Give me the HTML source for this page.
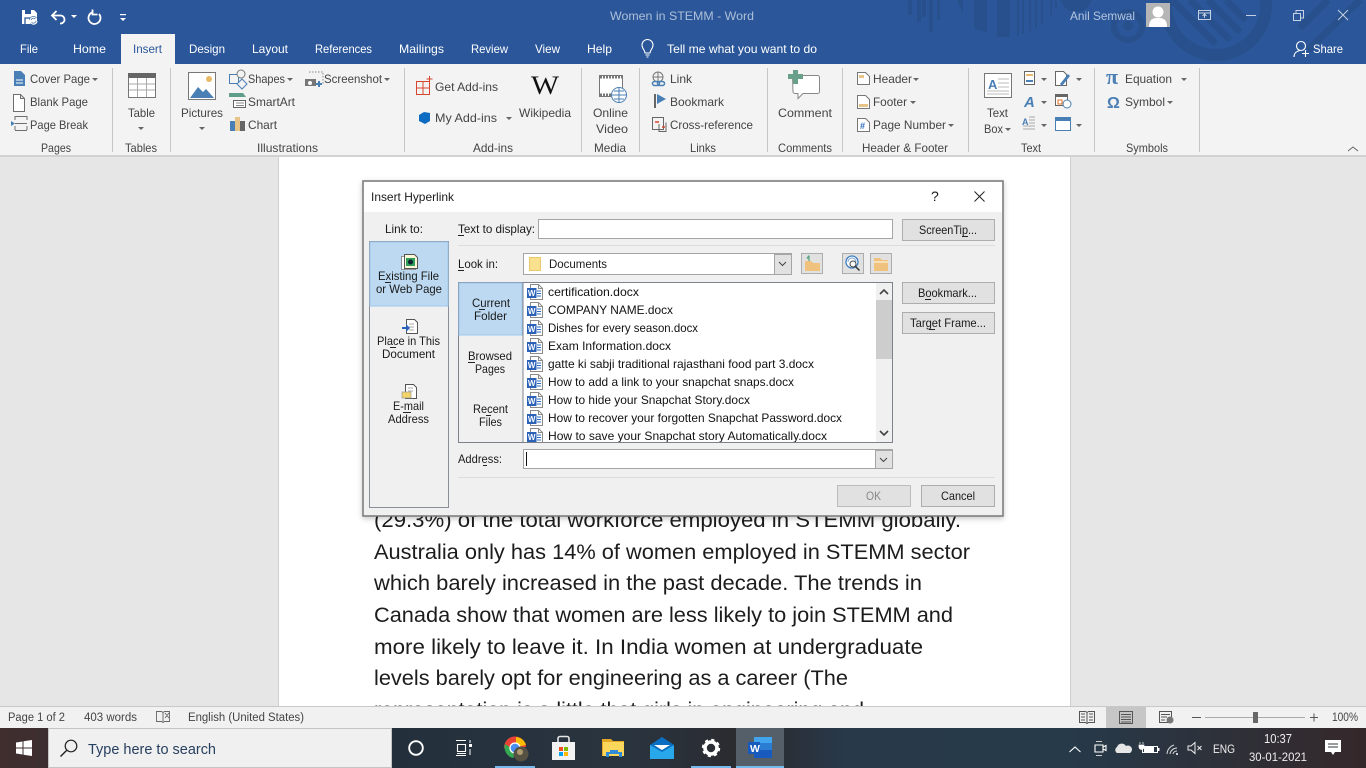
<!DOCTYPE html>
<html><head><meta charset="utf-8"><title>Women in STEMM - Word</title>
<style>
html,body{margin:0;padding:0;width:1366px;height:768px;overflow:hidden;background:#e6e6e6}
svg{display:block}
text{font-family:"Liberation Sans",sans-serif;font-size:12px;fill:#333}
.r text{fill:#444}
.d text{fill:#1a1a1a}
.tab text{fill:#fff}
.f text{fill:#111;font-size:11.6px}
.doc text{fill:#1c1c1c;font-size:21.5px}
.st text{fill:#444;font-size:11.5px}
.tb text{fill:#eee}
</style></head><body>
<svg width="1366" height="768" viewBox="0 0 1366 768" xmlns="http://www.w3.org/2000/svg">
<defs>
<linearGradient id="tbg" x1="0" x2="1" y1="0" y2="0">
<stop offset="0" stop-color="#402e2e"/><stop offset=".29" stop-color="#23303c"/><stop offset=".46" stop-color="#2a343f"/><stop offset=".55" stop-color="#2b2a2e"/><stop offset=".62" stop-color="#28394a"/><stop offset=".78" stop-color="#263a4a"/><stop offset="1" stop-color="#35282a"/>
</linearGradient>
<filter id="sh" x="-5%" y="-5%" width="110%" height="112%"><feDropShadow dx="0" dy="2" stdDeviation="3" flood-color="#000" flood-opacity=".22"/></filter>
<symbol id="wd" width="20" height="18" viewBox="0 0 20 18">
<path d="M6.500 1.500h8l4 4v11h-12z" fill="#fff" stroke="#8a8a8a"/><path d="M14.500 1.500v4h4" fill="none" stroke="#8a8a8a"/>
<path d="M13 8h4M13 10.500h4M13 13h4" stroke="#2b6cc0" fill="none"/>
<rect x="3" y="5" width="9.500" height="10" fill="#2b62b8"/>
<text x="7.700" y="13" text-anchor="middle" style="font-size:8px;font-weight:bold;fill:#fff">W</text>
</symbol>
<clipPath id="fc"><rect x="524" y="283" width="352" height="159"/></clipPath>
<clipPath id="tc"><rect x="0" y="0" width="1366" height="64"/></clipPath>
</defs>

<!-- title -->
<rect width="1366" height="64" fill="#2b579a"/>
<g fill="#27508c" clip-path="url(#tc)">
<rect x="908" y="0" width="4" height="15"/><rect x="917" y="0" width="4" height="22"/><rect x="922" y="0" width="4" height="17"/><rect x="929" y="0" width="4" height="32"/><rect x="937" y="0" width="3" height="20"/>
<path d="M957 0h6v14z"/><path d="M974 0h13v33l-13-5z"/><rect x="997" y="0" width="13" height="37"/>
<rect x="1017" y="0" width="2" height="36"/><rect x="1022" y="0" width="2" height="34"/><rect x="1029" y="0" width="2" height="31"/><rect x="1035" y="0" width="2" height="28"/><rect x="1041" y="0" width="2" height="24"/><rect x="1050" y="0" width="2" height="15"/><rect x="1055" y="0" width="2" height="8"/>
<circle cx="1076" cy="-4" r="16"/>
<circle cx="1128" cy="26" r="5"/>
<circle cx="1128" cy="26" r="14" fill="none" stroke="#27508c" stroke-width="6"/>
<circle cx="1216" cy="5" r="50" fill="none" stroke="#27508c" stroke-width="12"/>
<path d="M1172 0l44 44M1190 0l40 40M1208 0l32 32M1226 0l20 20M1328 0l-28 28M1360 0l-52 50" stroke="#27508c" stroke-width="7" fill="none"/>
</g>
<path d="M22 10h12l3 3v11H22z" fill="#fff"/><path d="M25 10h6v4h-6z" fill="#2b579a"/><path d="M25 24v-6h5" fill="none" stroke="#2b579a" stroke-width="1.300"/>
<path d="M30 20a3.500 3.500 0 0 1 6-1.500M37 21a3.500 3.500 0 0 1-6 2" fill="none" stroke="#2b579a" stroke-width="2.400"/><path d="M30 20a3.500 3.500 0 0 1 6-1.500M37 21a3.500 3.500 0 0 1-6 2" fill="none" stroke="#fff" stroke-width="1.200"/>
<g fill="none" stroke="#fff" stroke-width="1.800">
<path d="M56.500 11l-4.500 4.500 4.500 4.500M52 15.500h8a4 4 0 0 1 1 8h-1"/>
<path d="M92 12.500a6 6 0 1 0 7 1.500M92.500 9.500v5h5"/>
</g>
<path d="M71 15h6l-3 3zM120 18h6l-3 3z" fill="#fff"/><rect x="120" y="14" width="6" height="1.200" fill="#fff"/>
<text x="610" y="20" textLength="144" lengthAdjust="spacingAndGlyphs" style="fill:#aebfd8">Women in STEMM  -  Word</text>
<text x="1070" y="20" textLength="65" lengthAdjust="spacingAndGlyphs" style="fill:#b4c5dd">Anil Semwal</text>
<rect x="1146" y="3" width="24" height="24" fill="#b5b5b5"/>
<circle cx="1158" cy="12" r="5.500" fill="#fff"/><path d="M1149 27c0-8 4-9 9-9s9 1 9 9z" fill="#fff"/>
<g fill="none" stroke="#c6d2e4" stroke-width="1">
<path d="M1198.500 10.500h12v9h-12zM1198.500 13h12M1204.500 18v-4M1202.500 16l2-2 2 2"/>
<path d="M1246 15.500h10"/>
<path d="M1293.500 13.500h7v7h-7zM1296 13v-2.500h7.500v7.500h-3"/>
<path d="M1338 10l10 10M1348 10l-10 10"/>
</g>

<!-- tabs -->
<rect x="121" y="34" width="54" height="30" fill="#f3f3f3"/>
<g class="tab">
<text x="20" y="53" textLength="18" lengthAdjust="spacingAndGlyphs">File</text>
<text x="73" y="53" textLength="33" lengthAdjust="spacingAndGlyphs">Home</text>
<text x="133" y="53" textLength="29" lengthAdjust="spacingAndGlyphs" style="fill:#2b579a">Insert</text>
<text x="189" y="53" textLength="36" lengthAdjust="spacingAndGlyphs">Design</text>
<text x="252" y="53" textLength="36" lengthAdjust="spacingAndGlyphs">Layout</text>
<text x="315" y="53" textLength="57" lengthAdjust="spacingAndGlyphs">References</text>
<text x="399" y="53" textLength="45" lengthAdjust="spacingAndGlyphs">Mailings</text>
<text x="471" y="53" textLength="37" lengthAdjust="spacingAndGlyphs">Review</text>
<text x="535" y="53" textLength="25" lengthAdjust="spacingAndGlyphs">View</text>
<text x="587" y="53" textLength="25" lengthAdjust="spacingAndGlyphs">Help</text>
<text x="667" y="53" textLength="150" lengthAdjust="spacingAndGlyphs">Tell me what you want to do</text>
<text x="1313" y="53" textLength="30" lengthAdjust="spacingAndGlyphs">Share</text>
</g>
<g fill="none" stroke="#fff" stroke-width="1.100">
<path d="M645 53c0-3-3-4-3-8a5.500 5.500 0 0 1 11 0c0 4-3 5-3 8zM645.500 55h4M646.500 57h2"/>
<circle cx="1301" cy="46" r="4.500"/><path d="M1294 57c0-4 3-6 6-6.500M1302 53.500h7M1305.500 50v7"/>
</g>

<!-- ribbon -->
<rect y="64" width="1366" height="92" fill="#f3f3f3"/>
<rect y="155" width="1366" height="2" fill="#d2d2d2"/>
<g fill="#c6c6c6">
<rect x="112" y="68" width="1" height="84"/><rect x="170" y="68" width="1" height="84"/><rect x="404" y="68" width="1" height="84"/><rect x="581" y="68" width="1" height="84"/><rect x="639" y="68" width="1" height="84"/><rect x="767" y="68" width="1" height="84"/><rect x="842" y="68" width="1" height="84"/><rect x="968" y="68" width="1" height="84"/><rect x="1094" y="68" width="1" height="84"/><rect x="1199" y="68" width="1" height="84"/>
</g>
<g class="r">
<text x="30" y="83" textLength="60" lengthAdjust="spacingAndGlyphs">Cover Page</text>
<text x="30" y="106" textLength="58" lengthAdjust="spacingAndGlyphs">Blank Page</text>
<text x="30" y="129" textLength="58" lengthAdjust="spacingAndGlyphs">Page Break</text>
<text x="41" y="152" textLength="30" lengthAdjust="spacingAndGlyphs">Pages</text>
<text x="128" y="117" textLength="27" lengthAdjust="spacingAndGlyphs">Table</text>
<text x="125" y="152" textLength="32" lengthAdjust="spacingAndGlyphs">Tables</text>
<text x="181" y="117" textLength="42" lengthAdjust="spacingAndGlyphs">Pictures</text>
<text x="248" y="83" textLength="37" lengthAdjust="spacingAndGlyphs">Shapes</text>
<text x="248" y="106" textLength="47" lengthAdjust="spacingAndGlyphs">SmartArt</text>
<text x="248" y="129" textLength="29" lengthAdjust="spacingAndGlyphs">Chart</text>
<text x="324" y="83" textLength="58" lengthAdjust="spacingAndGlyphs">Screenshot</text>
<text x="257" y="152" textLength="61" lengthAdjust="spacingAndGlyphs">Illustrations</text>
<text x="435" y="91" textLength="63" lengthAdjust="spacingAndGlyphs">Get Add-ins</text>
<text x="435" y="122" textLength="62" lengthAdjust="spacingAndGlyphs">My Add-ins</text>
<text x="519" y="117" textLength="52" lengthAdjust="spacingAndGlyphs">Wikipedia</text>
<text x="473" y="152" textLength="40" lengthAdjust="spacingAndGlyphs">Add-ins</text>
<text x="593" y="117" textLength="35" lengthAdjust="spacingAndGlyphs">Online</text>
<text x="596" y="133" textLength="32" lengthAdjust="spacingAndGlyphs">Video</text>
<text x="594" y="152" textLength="32" lengthAdjust="spacingAndGlyphs">Media</text>
<text x="670" y="83" textLength="22" lengthAdjust="spacingAndGlyphs">Link</text>
<text x="670" y="106" textLength="54" lengthAdjust="spacingAndGlyphs">Bookmark</text>
<text x="670" y="129" textLength="83" lengthAdjust="spacingAndGlyphs">Cross-reference</text>
<text x="690" y="152" textLength="26" lengthAdjust="spacingAndGlyphs">Links</text>
<text x="778" y="117" textLength="54" lengthAdjust="spacingAndGlyphs">Comment</text>
<text x="778" y="152" textLength="54" lengthAdjust="spacingAndGlyphs">Comments</text>
<text x="873" y="83" textLength="39" lengthAdjust="spacingAndGlyphs">Header</text>
<text x="873" y="106" textLength="34" lengthAdjust="spacingAndGlyphs">Footer</text>
<text x="873" y="129" textLength="73" lengthAdjust="spacingAndGlyphs">Page Number</text>
<text x="862" y="152" textLength="86" lengthAdjust="spacingAndGlyphs">Header &amp; Footer</text>
<text x="987" y="117" textLength="21" lengthAdjust="spacingAndGlyphs">Text</text>
<text x="984" y="133" textLength="19" lengthAdjust="spacingAndGlyphs">Box</text>
<text x="1021" y="152" textLength="20" lengthAdjust="spacingAndGlyphs">Text</text>
<text x="1125" y="83" textLength="47" lengthAdjust="spacingAndGlyphs">Equation</text>
<text x="1125" y="106" textLength="40" lengthAdjust="spacingAndGlyphs">Symbol</text>
<text x="1126" y="152" textLength="42" lengthAdjust="spacingAndGlyphs">Symbols</text>
<text x="531" y="94" textLength="28" lengthAdjust="spacingAndGlyphs" style="font-family:'Liberation Serif',serif;font-size:26px;fill:#111">W</text>
<text x="1106" y="84" style="font-family:'Liberation Serif',serif;font-size:22px;font-weight:bold;fill:#4a7fb5">π</text>
<text x="1107" y="108" style="font-size:16px;font-weight:bold;fill:#4a7fb5">Ω</text>
</g>
<g fill="#666">
<path d="M92 78h6l-3 3zM287 78h6l-3 3zM384 78h6l-3 3zM138 127h6l-3 3zM199 127h6l-3 3zM506 117h6l-3 3zM913 78h6l-3 3zM910 101h6l-3 3zM948 124h6l-3 3zM1005 128h6l-3 3zM1041 78h6l-3 3zM1041 101h6l-3 3zM1041 124h6l-3 3zM1076 78h6l-3 3zM1076 124h6l-3 3zM1181 78h6l-3 3zM1167 101h6l-3 3z"/>
</g>
<path d="M1348 151l5-4 5 4" fill="none" stroke="#666"/>

<!-- ribbon icons -->
<path d="M14 71h7l4 4v11H14z" fill="#4a7fb5"/><path d="M16 80h7M16 83h7" stroke="#fff"/>
<path d="M13.500 94.500h7l4 4v13h-11zM20.500 94.500v4h4" fill="#fff" stroke="#6e6e6e"/>
<path d="M15 116.500h12M15 120v-4M27 120v-4M15 130.500h12M15 126v4M27 126v4M15 123.500h12" fill="none" stroke="#6e6e6e"/><path d="M11 121l4 2.500-4 2.500z" fill="#4a7fb5"/>

<rect x="128.500" y="73.500" width="27" height="24" fill="#fff" stroke="#777"/><rect x="128" y="73" width="28" height="5" fill="#666"/>
<path d="M129 84h26M129 90h26M137.500 78v19M146.500 78v19" stroke="#aaa" fill="none"/>

<rect x="188.500" y="72.500" width="27" height="27" fill="#fff" stroke="#777"/>
<circle cx="209" cy="79" r="3" fill="#e8b968"/><path d="M190 98l8-11 5 5 3-3 8 9z" fill="#4a7fb5"/>

<path d="M229.500 74.500h9v9h-9z" fill="none" stroke="#4a7fb5"/><circle cx="241" cy="74" r="4" fill="#f3f3f3" stroke="#777"/><path d="M237 84l5-5 5 5-5 5z" fill="#f3f3f3" stroke="#4a7fb5"/>
<path d="M229 93h14l3 4h-17z" fill="#5f9e8a"/><path d="M233.500 100.500h12v7h-12z" fill="#fff" stroke="#666"/><path d="M236 103h8M236 105.500h8" stroke="#888"/>
<rect x="230" y="121" width="5" height="10" fill="#4a7fb5"/><rect x="235" y="117" width="5" height="14" fill="#e8c388"/><rect x="240" y="121" width="5" height="10" fill="#666"/>
<path d="M309 72h14v12" fill="none" stroke="#888" stroke-dasharray="1.500 1.500"/><rect x="305" y="79" width="11" height="7" fill="#777"/><circle cx="310" cy="83" r="2" fill="#fff"/><path d="M318 81h2v2h2v2h-2v2h-2v-2h-2v-2h2z" fill="#4a7fb5"/>

<g fill="none" stroke="#d8442c"><path d="M416.500 81.500h13v13h-13zM416.500 88h13M423 81.500v13M426.500 79h6M429.500 76v6"/></g>
<path d="M419 115l5-3 6 1v8l-5 3-6-3z" fill="#0d6cc2"/>

<rect x="599.500" y="75.500" width="23" height="21" fill="#fff" stroke="#777"/>
<path d="M600 77h23M600 95h23" stroke="#777" stroke-width="3" stroke-dasharray="2 1"/>
<circle cx="619" cy="95" r="7.500" fill="#fff" stroke="#4a7fb5"/><path d="M612 95h14M619 88v14M614 91h10M614 99h10" stroke="#4a7fb5" fill="none"/>

<circle cx="658" cy="77" r="5" fill="none" stroke="#777"/><path d="M653 77h10M658 72v10" stroke="#777"/>
<rect x="652.500" y="81.500" width="7" height="4" rx="2" fill="none" stroke="#4a7fb5" stroke-width="1.500"/><rect x="657.500" y="81.500" width="7" height="4" rx="2" fill="none" stroke="#4a7fb5" stroke-width="1.500"/>
<rect x="654" y="94" width="2" height="14" fill="#666"/><path d="M657 94l9 5-9 5z" fill="#4a7fb5"/>
<path d="M652.500 117.500h11v12h-11zM659 124v7.500h7v-9" fill="none" stroke="#666"/><path d="M655 122h4" stroke="#d8442c" stroke-width="1.500"/><path d="M662 127h3" stroke="#d8442c" stroke-width="1.500"/>

<path d="M792.500 75.500h25a2 2 0 0 1 2 2v14a2 2 0 0 1-2 2H803l-5 5v-5h-3a2 2 0 0 1-2-2z" fill="#fff" stroke="#888"/>
<path d="M793 70h5v4h5v5h-5v5h-5v-5h-5v-5h5z" fill="#69a08a"/>

<path d="M857.500 72.500h8l4 4v8h-12z" fill="#fff" stroke="#777"/><rect x="859" y="75" width="5" height="3" fill="#e8c388"/>
<path d="M857.500 95.500h8l4 4v9h-12z" fill="#fff" stroke="#777"/><rect x="859" y="104" width="9" height="3" fill="#e8c388"/>
<path d="M857.500 118.500h8l4 4v9h-12z" fill="#fff" stroke="#777"/><text x="860" y="129" style="font-size:9px;font-weight:bold;fill:#2b6cc0">#</text>

<rect x="984.500" y="73.500" width="27" height="24" fill="#fff" stroke="#777"/><text x="988" y="89" style="font-size:13px;font-weight:bold;fill:#4a7fb5">A</text><path d="M998 79h11M998 83h11M998 87h11M987 91h22M987 94h22" stroke="#bbb"/>
<rect x="1024.500" y="71.500" width="10" height="13" fill="#fff" stroke="#666"/><rect x="1026" y="74" width="7" height="2" fill="#e8b968"/><rect x="1026" y="80" width="7" height="2" fill="#4a7fb5"/>
<text x="1024" y="107" style="font-size:15px;font-weight:bold;font-style:italic;fill:#4a7fb5">A</text>
<text x="1022" y="125" style="font-size:9px;font-weight:bold;fill:#4a7fb5">A</text><path d="M1029 117h6M1029 120h6M1029 123h6M1023 126h12M1023 129h12" stroke="#aaa"/>
<path d="M1055.500 71.500h8l3 3v11h-11z" fill="#fff" stroke="#666"/><path d="M1060 84l8-10 2 2-8 10z" fill="#4a7fb5"/>
<rect x="1055.500" y="94.500" width="12" height="11" fill="#fff" stroke="#666"/><rect x="1055" y="94" width="13" height="3" fill="#666"/><rect x="1058" y="100" width="4" height="4" fill="none" stroke="#e07020"/><circle cx="1067" cy="104" r="4" fill="#fff" stroke="#4a7fb5"/>
<rect x="1055.500" y="117.500" width="15" height="13" fill="#fff" stroke="#4a7fb5"/><rect x="1055" y="117" width="16" height="4" fill="#4a7fb5"/>

<!-- document -->
<rect y="157" width="1366" height="549" fill="#e6e6e6"/>
<rect x="279" y="157" width="791" height="549" fill="#fff"/>
<rect x="278" y="157" width="1" height="549" fill="#d0d0d0"/><rect x="1070" y="157" width="1" height="549" fill="#d0d0d0"/>
<g class="doc">
<text x="374" y="527" textLength="587" lengthAdjust="spacingAndGlyphs">(29.3%) of the total workforce employed in STEMM globally.</text>
<text x="374" y="559" textLength="596" lengthAdjust="spacingAndGlyphs">Australia only has 14% of women employed in STEMM sector</text>
<text x="374" y="590" textLength="548" lengthAdjust="spacingAndGlyphs">which barely increased in the past decade. The trends in</text>
<text x="374" y="622" textLength="579" lengthAdjust="spacingAndGlyphs">Canada show that women are less likely to join STEMM and</text>
<text x="374" y="654" textLength="549" lengthAdjust="spacingAndGlyphs">more likely to leave it. In India women at undergraduate</text>
<text x="374" y="685" textLength="474" lengthAdjust="spacingAndGlyphs">levels barely opt for engineering as a career (The</text>
<text x="374" y="717" textLength="490" lengthAdjust="spacingAndGlyphs">representation is a little that girls in engineering and</text>
</g>

<!-- status -->
<rect y="706" width="1366" height="1.500" fill="#c8c8c8"/>
<rect y="707" width="1366" height="21" fill="#f1f1f1"/>
<g class="st">
<text x="8" y="721" textLength="57" lengthAdjust="spacingAndGlyphs">Page 1 of 2</text>
<text x="84" y="721" textLength="53" lengthAdjust="spacingAndGlyphs">403 words</text>
<text x="188" y="721" textLength="116" lengthAdjust="spacingAndGlyphs">English (United States)</text>
<text x="1332" y="721" textLength="26" lengthAdjust="spacingAndGlyphs">100%</text>
</g>
<path d="M156.500 711.500h5l1.500 1 1.500-1h5v10h-5l-1.500 1-1.500-1h-5zM163 712.500v9M165 713l4 5M169 713l-4 5" fill="none" stroke="#666" stroke-width=".9"/>
<rect x="1106" y="707" width="40" height="21" fill="#c6c6c6"/>
<g fill="none" stroke="#555">
<path d="M1079.500 711.500h6l1.500 1 1.500-1h6v11h-6l-1.500 1-1.500-1h-6zM1087 712.500v10M1081 714h4M1081 717h4M1081 720h4M1089 714h4M1089 717h4M1089 720h4"/>
<path d="M1119.500 711.500h13v12h-13zM1121 714.500h10M1121 717h10M1121 719.500h10M1121 722h10"/>
<path d="M1159.500 711.500h12v11h-12zM1161 714.500h9M1161 717h6M1161 720h4"/>
</g>
<circle cx="1170" cy="720" r="3.500" fill="#777"/>
<rect x="1192" y="717" width="9" height="1" fill="#555"/><rect x="1205" y="717" width="100" height="1" fill="#aaa"/><rect x="1253" y="712" width="5" height="11" fill="#666"/>
<path d="M1310 717.500h8M1314 713.500v8" stroke="#555"/>

<!-- dialog -->
<rect x="363" y="181" width="640" height="335" fill="#f0f0f0" stroke="#777" stroke-width="1.500" filter="url(#sh)"/>
<rect x="364" y="182" width="638" height="30" fill="#fff"/>
<g class="d">
<text x="371" y="201" textLength="83" lengthAdjust="spacingAndGlyphs">Insert Hyperlink</text>
<text x="931" y="201" style="font-size:14px">?</text>
</g>
<path d="M974.500 191.500l10 10M984.500 191.500l-10 10" stroke="#222" fill="none"/>

<rect x="369.500" y="241.500" width="79" height="266" fill="#f0f0f0" stroke="#8a8f99"/>
<rect x="370" y="242" width="78" height="64" fill="#bcd9f1" stroke="#9cc8ec"/>
<path d="M401.500 256.500h3v12h11v1h-14z" fill="#fff" stroke="#777" stroke-width=".8"/>
<path d="M404.500 254.500h10l3 3v11h-13z" fill="#fff8d8" stroke="#555"/><rect x="406" y="258" width="9" height="8" fill="#2e9e5a"/><circle cx="410.500" cy="262" r="2.500" fill="#123"/>
<path d="M406.500 319.500h8l3 3v11h-11z" fill="#fff" stroke="#555"/><path d="M409 324h5M409 327h5M409 330h5" stroke="#aaa"/><path d="M402 327h4v-3l4 4-4 4v-3h-4z" fill="#2b62b8"/>
<path d="M405.500 384.500h8l3 3v11h-11z" fill="#fff" stroke="#555"/><path d="M408 388h5M408 391h5" stroke="#aaa"/><rect x="402" y="392" width="9" height="6" fill="#f2d468" stroke="#999" stroke-width=".7"/>

<g class="d">
<text x="385" y="233" textLength="38" lengthAdjust="spacingAndGlyphs">Link to:</text>
<text x="458" y="233" textLength="77" lengthAdjust="spacingAndGlyphs">Text to display:</text>
<text x="458" y="268" textLength="40" lengthAdjust="spacingAndGlyphs">Look in:</text>
<text x="378" y="280" textLength="61" lengthAdjust="spacingAndGlyphs">Existing File</text>
<text x="376" y="293" textLength="66" lengthAdjust="spacingAndGlyphs">or Web Page</text>
<text x="377" y="345" textLength="63" lengthAdjust="spacingAndGlyphs">Place in This</text>
<text x="382" y="358" textLength="53" lengthAdjust="spacingAndGlyphs">Document</text>
<text x="393" y="410" textLength="31" lengthAdjust="spacingAndGlyphs">E-mail</text>
<text x="388" y="423" textLength="41" lengthAdjust="spacingAndGlyphs">Address</text>
<text x="458" y="463" textLength="44" lengthAdjust="spacingAndGlyphs">Address:</text>
</g>
<rect x="538.500" y="219.500" width="354" height="19" fill="#fff" stroke="#a5a5a5"/>
<rect x="458" y="245" width="537" height="1" fill="#dcdcdc"/>
<rect x="523.500" y="253.500" width="268" height="21" fill="#fff" stroke="#a5a5a5"/>
<rect x="774.500" y="254.500" width="17" height="20" fill="#e1e1e1" stroke="#a5a5a5"/>
<path d="M779 262l3.500 3.500 3.500-3.500" fill="none" stroke="#444"/>
<path d="M529.500 257.500h11v13h-11z" fill="#fbe08e" stroke="#e5c96c"/>
<g class="d"><text x="549" y="268" textLength="58" lengthAdjust="spacingAndGlyphs">Documents</text></g>

<g fill="#e1e1e1" stroke="#adadad">
<rect x="801.500" y="253.500" width="21" height="20"/><rect x="842.500" y="253.500" width="21" height="20"/><rect x="870.500" y="253.500" width="21" height="20"/>
</g>
<path d="M805 261h6l2 2h7v8h-15z" fill="#efc27e"/><path d="M809 261v-4l-2 1.500 2-3" fill="none" stroke="#5fa584" stroke-width="1.300"/>
<path d="M874 258h6l2 2h6v11h-14z" fill="#efc27e"/><path d="M874 261h14v2h-14z" fill="#f7dfb8"/>
<circle cx="852" cy="262" r="6" fill="#fff" stroke="#3f7fbf" stroke-width="1.300"/><path d="M848 262a4 4 0 0 1 8 0" fill="none" stroke="#7aa8d0"/><circle cx="853" cy="264" r="3" fill="#fff" stroke="#444"/><path d="M855.500 266.500l4 4" stroke="#333" stroke-width="1.500"/>

<rect x="458.500" y="282.500" width="434" height="160" fill="#f0f0f0" stroke="#7d828c"/>
<rect x="459" y="283" width="63" height="52" fill="#bcd9f1" stroke="#9cc8ec"/>
<rect x="523" y="283" width="369" height="159" fill="#fff"/>
<rect x="522.500" y="283" width="1" height="159" fill="#7d828c"/>
<g class="d">
<text x="472" y="307" textLength="38" lengthAdjust="spacingAndGlyphs">Current</text>
<text x="474" y="320" textLength="33" lengthAdjust="spacingAndGlyphs">Folder</text>
<text x="468" y="360" textLength="44" lengthAdjust="spacingAndGlyphs">Browsed</text>
<text x="475" y="373" textLength="30" lengthAdjust="spacingAndGlyphs">Pages</text>
<text x="473" y="413" textLength="35" lengthAdjust="spacingAndGlyphs">Recent</text>
<text x="479" y="426" textLength="23" lengthAdjust="spacingAndGlyphs">Files</text>
</g>
<g clip-path="url(#fc)">
<use href="#wd" x="524" y="283"/><use href="#wd" x="524" y="301"/><use href="#wd" x="524" y="319"/><use href="#wd" x="524" y="337"/><use href="#wd" x="524" y="355"/><use href="#wd" x="524" y="373"/><use href="#wd" x="524" y="391"/><use href="#wd" x="524" y="409"/><use href="#wd" x="524" y="427"/>
<g class="f">
<text x="548" y="296" textLength="91" lengthAdjust="spacingAndGlyphs">certification.docx</text>
<text x="548" y="314" textLength="125" lengthAdjust="spacingAndGlyphs">COMPANY NAME.docx</text>
<text x="548" y="332" textLength="150" lengthAdjust="spacingAndGlyphs">Dishes for every season.docx</text>
<text x="548" y="350" textLength="123" lengthAdjust="spacingAndGlyphs">Exam Information.docx</text>
<text x="548" y="368" textLength="266" lengthAdjust="spacingAndGlyphs">gatte ki sabji traditional rajasthani food part 3.docx</text>
<text x="548" y="386" textLength="246" lengthAdjust="spacingAndGlyphs">How to add a link to your snapchat snaps.docx</text>
<text x="548" y="404" textLength="202" lengthAdjust="spacingAndGlyphs">How to hide your Snapchat Story.docx</text>
<text x="548" y="422" textLength="294" lengthAdjust="spacingAndGlyphs">How to recover your forgotten Snapchat Password.docx</text>
<text x="548" y="440" textLength="279" lengthAdjust="spacingAndGlyphs">How to save your Snapchat story Automatically.docx</text>
</g>
</g>
<rect x="876" y="283" width="16" height="159" fill="#f0f0f0"/>
<rect x="876" y="300" width="16" height="59" fill="#cdcdcd"/>
<path d="M880 294l4-4 4 4M880 431l4 4 4-4" fill="none" stroke="#444" stroke-width="1.600"/>

<rect x="523.500" y="449.500" width="369" height="19" fill="#fff" stroke="#a5a5a5"/>
<rect x="875.500" y="450.500" width="17" height="18" fill="#e1e1e1" stroke="#a5a5a5"/>
<path d="M880 458l3.500 3.500 3.500-3.500" fill="none" stroke="#444"/>
<rect x="526" y="452" width="1" height="14" fill="#111"/>
<rect x="458" y="477" width="537" height="1" fill="#dcdcdc"/>

<g fill="#e1e1e1" stroke="#adadad">
<rect x="902.500" y="219.500" width="92" height="21"/><rect x="902.500" y="282.500" width="92" height="21"/><rect x="902.500" y="312.500" width="92" height="21"/><rect x="921.500" y="485.500" width="73" height="21"/>
</g>
<rect x="837.500" y="485.500" width="73" height="21" fill="#e1e1e1" stroke="#bcbcbc"/>
<g class="d">
<text x="919" y="234" textLength="58" lengthAdjust="spacingAndGlyphs">ScreenTip...</text>
<text x="918" y="297" textLength="59" lengthAdjust="spacingAndGlyphs">Bookmark...</text>
<text x="910" y="327" textLength="76" lengthAdjust="spacingAndGlyphs">Target Frame...</text>
<text x="866" y="500" textLength="15" lengthAdjust="spacingAndGlyphs" style="fill:#888">OK</text>
<text x="941" y="500" textLength="34" lengthAdjust="spacingAndGlyphs">Cancel</text>
</g>
<g fill="#222">
<rect x="458" y="235" width="6" height="1"/><rect x="458" y="270" width="6" height="1"/><rect x="385" y="282" width="6" height="1"/><rect x="479" y="309" width="6" height="1"/><rect x="390" y="347" width="6" height="1"/><rect x="468" y="362" width="7" height="1"/><rect x="486" y="415" width="5" height="1"/><rect x="403" y="412" width="8" height="1"/><rect x="483" y="465" width="4" height="1"/><rect x="962" y="236" width="6" height="1"/><rect x="925" y="299" width="6" height="1"/><rect x="929" y="329" width="6" height="1"/>
</g>

<!-- taskbar -->
<rect y="728" width="1366" height="40" fill="url(#tbg)"/>
<path d="M16 742.500l6.500-1v6h-6.500zM23.500 741.300l8.500-1.300v7.500h-8.500zM16 748.500h6.500v6l-6.500-1zM23.500 748.500H32v7.500l-8.500-1.300z" fill="#fff"/>
<rect x="48.500" y="728.500" width="343" height="39" fill="#f0f0f0" stroke="#c4c4c4"/>
<circle cx="71" cy="746" r="5.800" fill="none" stroke="#222" stroke-width="1.200"/><path d="M66.500 750.500l-6 6" stroke="#222" stroke-width="1.400"/>
<text x="88" y="754" textLength="128" lengthAdjust="spacingAndGlyphs" style="font-size:14.500px;fill:#27405f">Type here to search</text>
<circle cx="416" cy="748" r="6.800" fill="none" stroke="#fff" stroke-width="1.900"/>
<g fill="none" stroke="#fff" stroke-width="1.100"><path d="M456 740.500h10M456 755.500h10M457.500 744.500h8v7h-8zM457 753.500h9"/></g><rect x="469" y="744" width="3" height="3" fill="#fff"/><rect x="469.500" y="749" width="1" height="6" fill="#fff"/><rect x="469.500" y="740" width="1" height="3" fill="#fff"/>
<path d="M504 748a11 11 0 0 1 22-1h-10z" fill="#e84335"/><path d="M516 737a11 11 0 0 1 10 8l-10 2z" fill="#fbbc05"/><path d="M505 744a11 11 0 0 0 8 14l4-6z" fill="#34a853"/><circle cx="515" cy="748" r="5" fill="#4a8ef0" stroke="#fff" stroke-width="1.300"/><circle cx="521" cy="754" r="7.500" fill="#555244"/><circle cx="520" cy="752" r="3" fill="#b09a70"/>
<rect x="495" y="766" width="40" height="2" fill="#76b9ed"/>
<path d="M552 742h23v18h-23z" fill="#f3f3f3"/><path d="M558 742v-3.500a2 2 0 0 1 2-2h7a2 2 0 0 1 2 2v3.500" fill="none" stroke="#e6e6e6" stroke-width="1.600"/>
<rect x="559" y="747" width="4" height="4" fill="#f25022"/><rect x="564" y="747" width="4" height="4" fill="#7fba00"/><rect x="559" y="752" width="4" height="4" fill="#00a4ef"/><rect x="564" y="752" width="4" height="4" fill="#ffb900"/>
<path d="M602 739h9l2 2h11v15h-22z" fill="#e3a824"/><rect x="603" y="742" width="21" height="14" fill="#fbd75b"/><path d="M606 757v-5h4v-2h8v2h4v5h-3v-3h-10v3z" fill="#2f8bd8"/>
<path d="M650 745l12-8 12 8v14h-24z" fill="#0a6fc2"/><path d="M650 745l12 7 12-7v14h-24z" fill="#28a8ea"/><path d="M654 745h16l-8 5z" fill="#fff"/>
<circle cx="711" cy="748" r="6" fill="none" stroke="#fff" stroke-width="3.600"/><circle cx="711" cy="748" r="8.200" fill="none" stroke="#fff" stroke-width="2" stroke-dasharray="3.200 3.240"/>
<rect x="691" y="766" width="40" height="2" fill="#76b9ed"/>
<rect x="736" y="728" width="48" height="38" fill="#555f69"/><rect x="736" y="766" width="48" height="2" fill="#76b9ed"/>
<rect x="754" y="737" width="18" height="21" fill="#2b7cd3"/><rect x="754" y="737" width="18" height="6" fill="#41a5ee"/><rect x="754" y="750" width="18" height="8" fill="#185abd"/>
<rect x="748" y="742" width="12" height="12" fill="#185abd"/>
<text x="750" y="752" style="font-size:10.500px;font-weight:bold;fill:#fff">W</text>

<path d="M1069.500 752l5.500-5 5.500 5" fill="none" stroke="#fff" stroke-width="1.100"/>
<path d="M1095 745h8v7h-8zM1103 747l3-1.500v5l-3-1.500" fill="none" stroke="#fff" stroke-width="1.100"/><path d="M1096 741.500h6M1096 755.500h6" stroke="#ccc"/>
<path d="M1117 753a3.500 3.500 0 0 1 0-6 5 5 0 0 1 9-1 4 4 0 0 1 4 7z" fill="#e6e6e6"/>
<path d="M1142.500 746.500h15v6h-15z" fill="none" stroke="#fff"/><rect x="1144" y="747" width="10" height="5" fill="#fff"/><rect x="1158" y="748" width="1.500" height="3" fill="#fff"/><path d="M1140 744v-2M1143 744v-2M1139 745h5v2a2.500 2.500 0 0 1-5 0z" stroke="#fff" fill="#fff" stroke-width=".7"/>
<path d="M1167 754a10 10 0 0 1 7-9M1170 754a7 7 0 0 1 7-6M1173 754a4 4 0 0 1 4-3" fill="none" stroke="#ddd" stroke-width="1"/><circle cx="1177" cy="754" r="1" fill="#fff"/>
<path d="M1188 746h3l4-3.500v11l-4-3.500h-3z" fill="none" stroke="#eee"/><path d="M1197.500 746l4 4M1201.500 746l-4 4" stroke="#eee"/>
<g class="tb">
<text x="1213" y="753" textLength="22" lengthAdjust="spacingAndGlyphs">ENG</text>
<text x="1264" y="743" textLength="28" lengthAdjust="spacingAndGlyphs" style="font-size:12.500px">10:37</text>
<text x="1249" y="761" textLength="58" lengthAdjust="spacingAndGlyphs">30-01-2021</text>
</g>
<path d="M1325 740h16v12h-6l-2 3-2-3h-6z" fill="#fff"/><path d="M1328 744h10M1328 747h10" stroke="#33343a"/>
</svg>
</body></html>
